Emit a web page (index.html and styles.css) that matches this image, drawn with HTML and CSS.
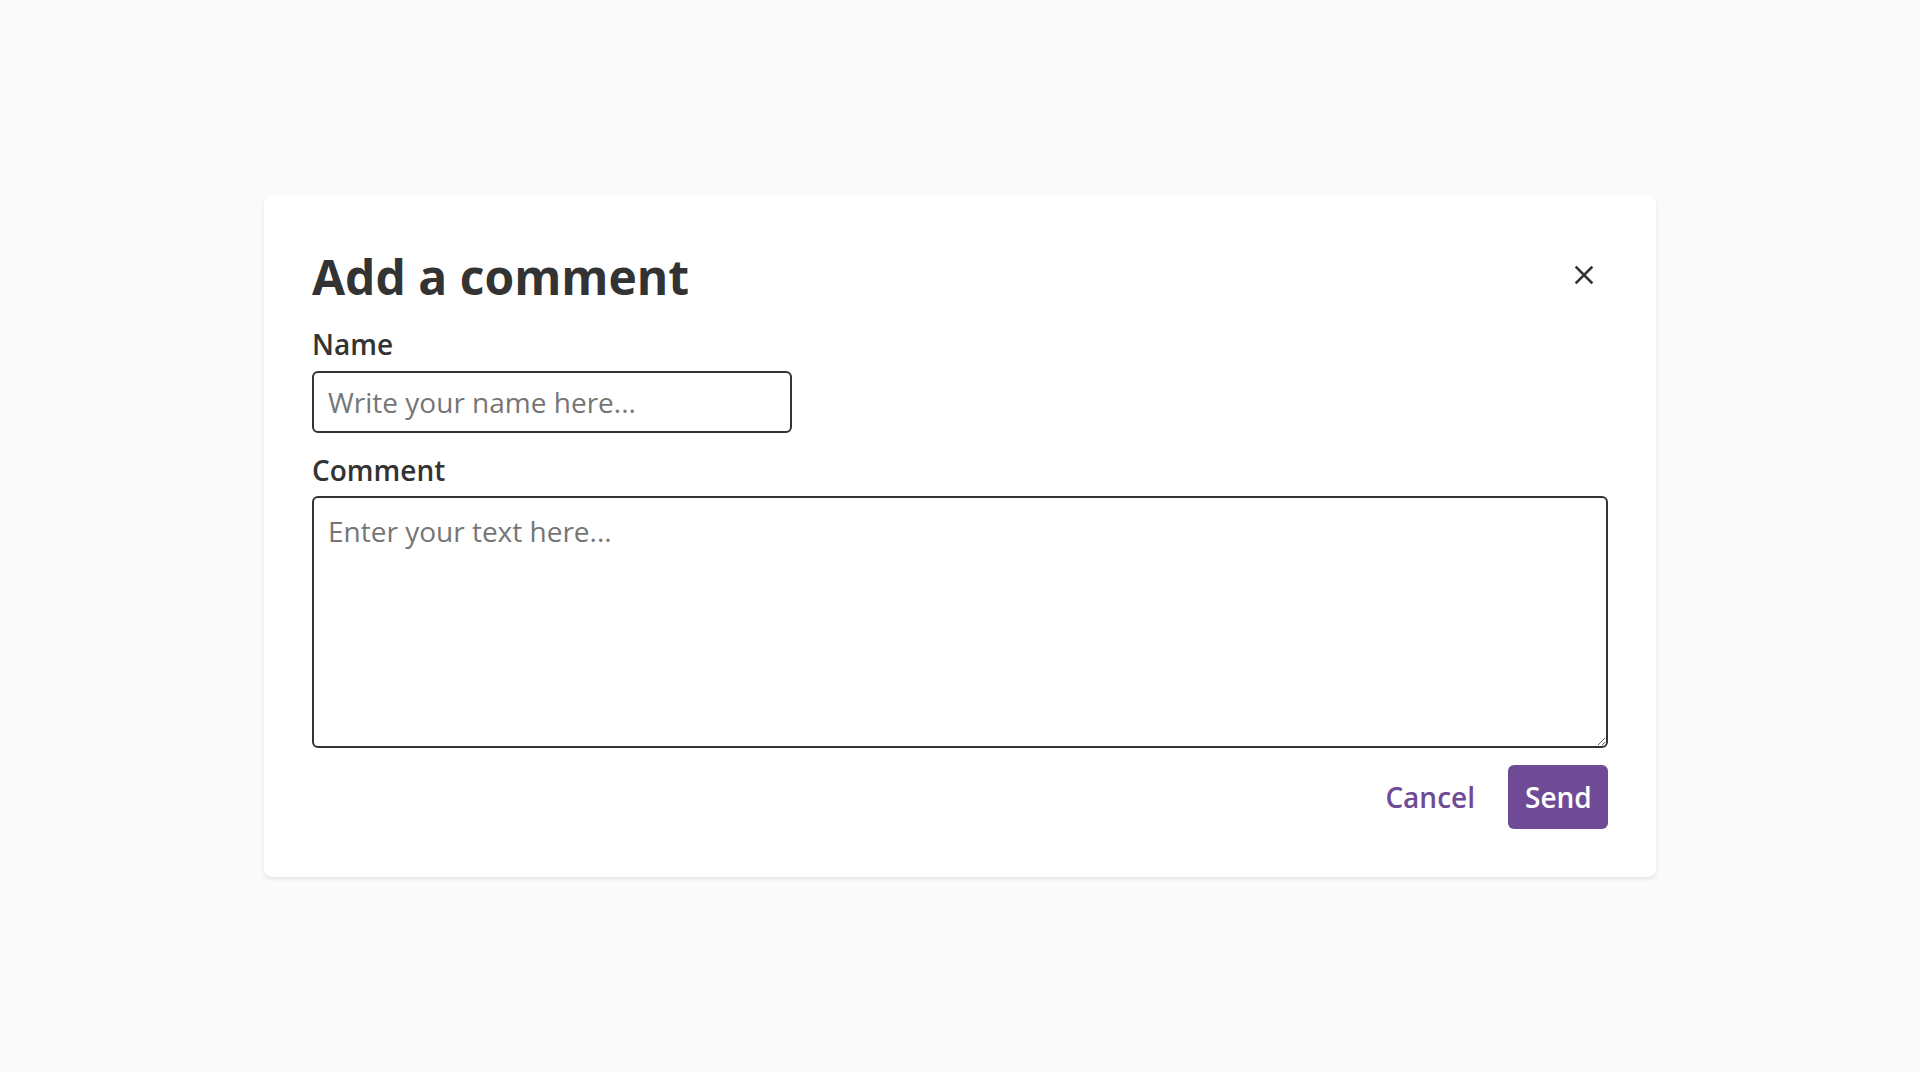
FILE: index.html
```html
<!DOCTYPE html>
<html lang="en">
<head>
<meta charset="utf-8">
<title>Add a comment</title>
<link rel="stylesheet" href="styles.css">
</head>
<body>
<div class="page">
  <div class="dialog" role="dialog" aria-labelledby="dlg-title">
    <div class="dialog-header">
      <h1 class="dialog-title" id="dlg-title">Add a comment</h1>
      <button class="close-btn" type="button" aria-label="Close">
        <svg width="18" height="18" viewBox="0 0 18 18" aria-hidden="true">
          <path d="M1.5 1.5 L16.5 16.5 M16.5 1.5 L1.5 16.5" stroke="#333" stroke-width="2.6" stroke-linecap="square" fill="none"/>
        </svg>
      </button>
    </div>
    <div class="field field-name">
      <label class="field-label" for="name">Name</label>
      <input class="text-input" id="name" type="text" placeholder="Write your name here...">
    </div>
    <div class="field field-comment">
      <label class="field-label" for="comment">Comment</label>
      <textarea class="text-area" id="comment" placeholder="Enter your text here..."></textarea>
    </div>
    <div class="actions">
      <button class="btn btn-link" type="button">Cancel</button>
      <button class="btn btn-primary" type="button">Send</button>
    </div>
  </div>
</div>
</body>
</html>
```

FILE: styles.css
```css
* { box-sizing: border-box; }
html, body { margin: 0; padding: 0; }
body {
  background: #fafafa;
  font-family: "Open Sans", "Noto Sans", sans-serif;
  color: #333333;
}
.page {
  min-height: 100vh;
  display: flex;
  align-items: center;
  justify-content: center;
}
.dialog {
  width: 1392px;
  background: #ffffff;
  border-radius: 8px;
  box-shadow: 0 2px 4px rgba(0, 0, 0, 0.09);
  padding: 48px;
}
.dialog-header {
  display: flex;
  align-items: center;
  justify-content: space-between;
  margin-bottom: 12px;
}
.dialog-title {
  margin: 0;
  font-size: 48px;
  font-weight: 700;
  line-height: 68px;
  color: #333333;
}
.close-btn {
  width: 48px;
  height: 48px;
  border: 0;
  background: transparent;
  padding: 0;
  display: flex;
  align-items: center;
  justify-content: center;
  cursor: pointer;
  margin-bottom: 4px;
}
.field { display: flex; flex-direction: column; }
.field-name { margin-bottom: 16px; }
.field-comment { margin-bottom: 17px; }
.field-label {
  font-size: 28px;
  font-weight: 600;
  line-height: 42px;
  margin-bottom: 5.5px;
  color: #333333;
}
.text-input, .text-area {
  font-family: "Open Sans", "Noto Sans", sans-serif;
  font-size: 28px;
  color: #333333;
  border: 2px solid #333333;
  border-radius: 6px;
  background: #ffffff;
  outline: none;
}
.text-input {
  width: 480px;
  height: 62px;
  padding: 0 14px;
}
.text-area {
  width: 100%;
  height: 252px;
  padding: 14px 14px 12px;
  line-height: normal;
  resize: both;
}
.text-input::placeholder, .text-area::placeholder { color: #767676; opacity: 1; }
.actions {
  display: flex;
  justify-content: flex-end;
  align-items: center;
}
.btn {
  font-family: "Open Sans", "Noto Sans", sans-serif;
  font-size: 28px;
  font-weight: 600;
  height: 64px;
  border-radius: 6px;
  border: 0;
  cursor: pointer;
  line-height: 1;
}
.btn-link {
  background: transparent;
  color: #6f4b96;
  padding: 0 33px 0 16px;
}
.btn-primary {
  background: #6f4b96;
  color: #ffffff;
  padding: 0 17px;
  width: 100px;
}
```
